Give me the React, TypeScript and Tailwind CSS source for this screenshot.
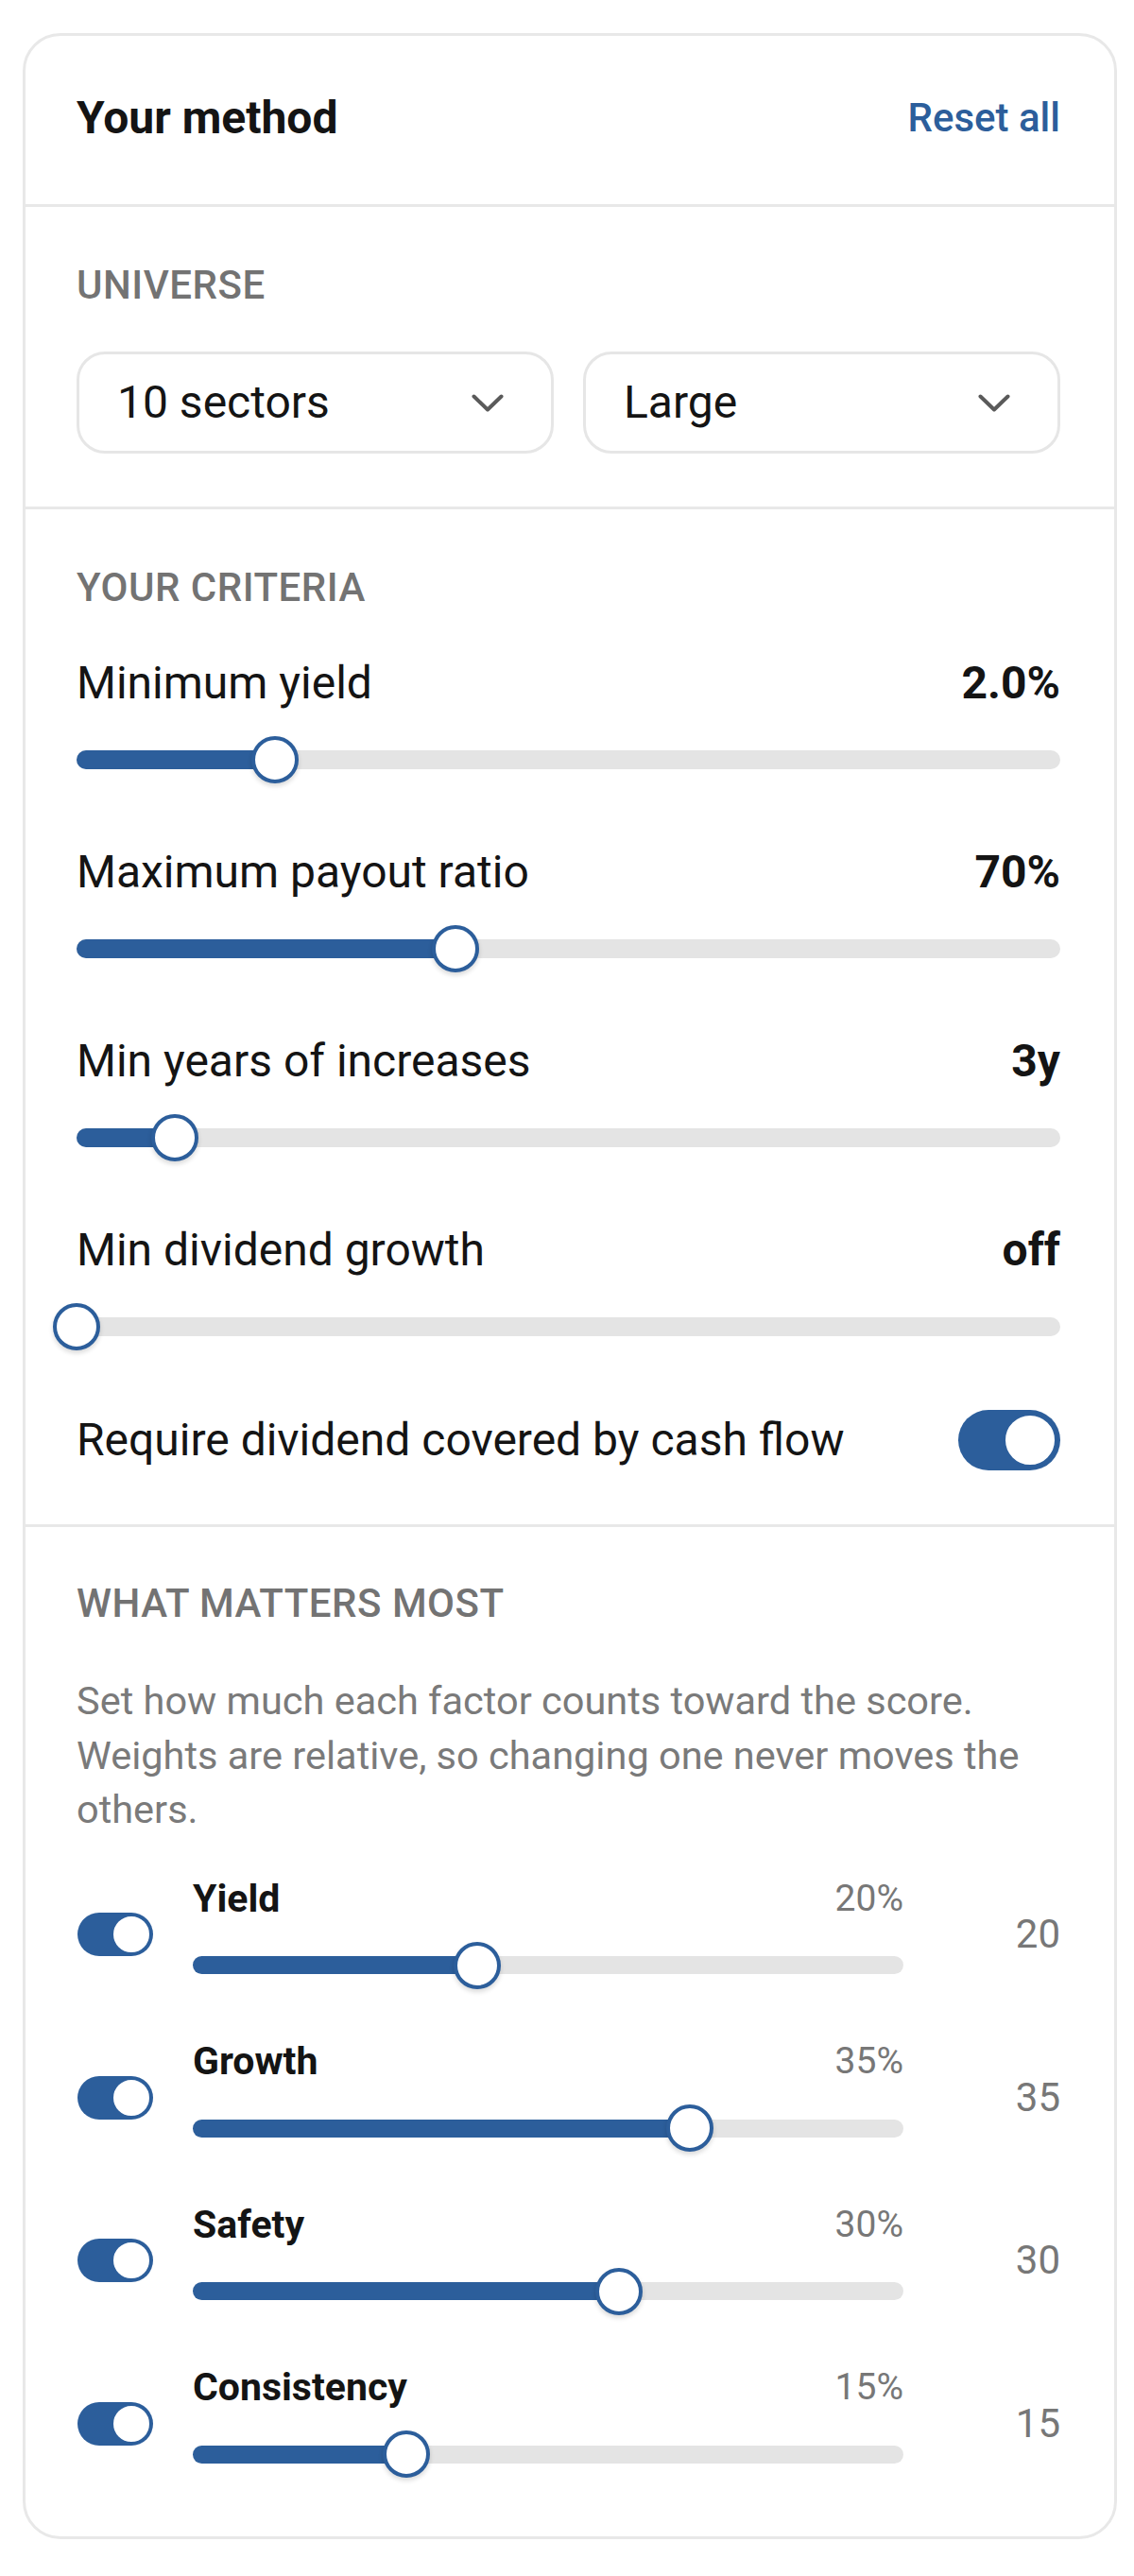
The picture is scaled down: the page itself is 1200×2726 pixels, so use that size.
import React from 'react'

interface Criterion {
  label: string
  value: string
  pct: number
}

const criteria: Criterion[] = [
  { label: 'Minimum yield', value: '2.0%', pct: 20.2 },
  { label: 'Maximum payout ratio', value: '70%', pct: 38.5 },
  { label: 'Min years of increases', value: '3y', pct: 10 },
  { label: 'Min dividend growth', value: 'off', pct: 0 },
]

const weights = [
  { label: 'Yield', weight: 20 },
  { label: 'Growth', weight: 35 },
  { label: 'Safety', weight: 30 },
  { label: 'Consistency', weight: 15 },
]

function Chevron() {
  return (
    <svg width="34" height="19" viewBox="0 0 34 19" fill="none">
      <polyline
        points="2.5,2.5 17,16.5 31.5,2.5"
        stroke="#5a5a5a"
        strokeWidth="4"
        strokeLinecap="round"
        strokeLinejoin="round"
      />
    </svg>
  )
}

function Select({ label }: { label: string }) {
  return (
    <div className="flex-1 h-[108px] rounded-[30px] border-[3px] border-[#e6e6e6] flex items-center justify-between pl-[40px] pr-[50px]">
      <span className="text-[48px] leading-[48px]">{label}</span>
      <Chevron />
    </div>
  )
}

function Slider({ pct, thin }: { pct: number; thin?: boolean }) {
  return (
    <div className="relative h-[50px] flex items-center">
      <div className={`relative w-full rounded-full bg-[#e4e4e4] ${thin ? 'h-[19px]' : 'h-[20px]'}`}>
        <div className="absolute left-0 top-0 h-full rounded-full bg-[#2c5e9b]" style={{ width: `${pct}%` }} />
      </div>
      {/* thumb */}
      <div
        className="absolute top-0 w-[50px] h-[50px] -ml-[25px] rounded-full bg-white border-[4px] border-[#2c5e9b] shadow-[0_3px_5px_rgba(0,0,0,0.15)]"
        style={{ left: `${pct}%` }}
      />
    </div>
  )
}

function BigToggle() {
  return (
    <div className="relative w-[108px] h-[64px] rounded-full bg-[#2c5e9b] shrink-0">
      <div className="absolute right-[3px] top-[3px] w-[58px] h-[58px] rounded-full bg-white border-[3px] border-[#2c5e9b]" />
    </div>
  )
}

function SmallToggle() {
  return (
    <div className="relative w-[80px] h-[46px] rounded-full bg-[#2c5e9b] shrink-0">
      <div className="absolute right-[1px] top-[1px] w-[44px] h-[44px] rounded-full bg-white border-[3px] border-[#2c5e9b]" />
    </div>
  )
}

export default function App() {
  return (
    <div className="min-h-screen bg-white pt-[35px] pl-[24px] font-['Roboto',sans-serif]">
      <div className="w-[1158px] rounded-[40px] border-[3px] border-[#e8e8e8] bg-white text-[#141414]">
        {/* Header */}
        <div className="flex items-center justify-between pl-[54px] pr-[57px] pt-[63px] pb-[67px] border-b-[3px] border-[#e8e8e8]">
          <h2 className="text-[48px] leading-[48px] font-bold">Your method</h2>
          <button className="text-[42px] leading-[48px] font-medium text-[#2c5e9b]">Reset all</button>
        </div>

        {/* Universe */}
        <div className="pl-[54px] pr-[57px] pt-[62px] pb-[56px] border-b-[3px] border-[#e8e8e8]">
          <div className="text-[42px] leading-[42px] font-medium tracking-[0.5px] text-[#737373]">UNIVERSE</div>
          <div className="mt-[49px] flex gap-[31px]">
            <Select label="10 sectors" />
            <Select label="Large" />
          </div>
        </div>

        {/* Criteria */}
        <div className="pl-[54px] pr-[57px] pt-[62px] pb-[57px] border-b-[3px] border-[#e8e8e8]">
          <div className="text-[42px] leading-[42px] font-medium tracking-[0.5px] text-[#737373]">YOUR CRITERIA</div>
          <div className="mt-[56px] flex flex-col gap-[70px]">
            {criteria.map((c) => (
              <div key={c.label}>
                <div className="flex items-center justify-between text-[48px] leading-[48px]">
                  <span>{c.label}</span>
                  <span className="font-bold">{c.value}</span>
                </div>
                <div className="mt-[32px]">
                  <Slider pct={c.pct} />
                </div>
              </div>
            ))}
          </div>
          <div className="mt-[63px] flex items-center justify-between">
            <span className="text-[48px] leading-[48px]">Require dividend covered by cash flow</span>
            <BigToggle />
          </div>
        </div>

        {/* What matters most */}
        <div className="pl-[54px] pr-[57px] pt-[60px] pb-[62px]">
          <div className="text-[42px] leading-[42px] font-medium tracking-[0.5px] text-[#737373]">WHAT MATTERS MOST</div>
          <p className="mt-[53px] text-[41.5px] leading-[57.5px] text-[#7a7a7a]">
            Set how much each factor counts toward the score. Weights are relative, so changing one never moves the
            others.
          </p>
          <div className="mt-[46px] flex flex-col gap-[57.5px]">
            {weights.map((w) => (
              <div key={w.label} className="flex items-center">
                <div className="ml-[1px]">
                  <SmallToggle />
                </div>
                <div className="flex-1 ml-[42px]">
                  <div className="flex items-center justify-between h-[39px] leading-[39px]">
                    <span className="text-[41px] font-bold">{w.label}</span>
                    <span className="text-[39px] text-[#777777]">{w.weight}%</span>
                  </div>
                  <div className="mt-[26px]">
                    <Slider pct={w.weight * 2} thin />
                  </div>
                </div>
                <div className="w-[120px] ml-[46px] text-right text-[42px] leading-[42px] text-[#777777]">
                  {w.weight}
                </div>
              </div>
            ))}
          </div>
        </div>
      </div>
    </div>
  )
}
